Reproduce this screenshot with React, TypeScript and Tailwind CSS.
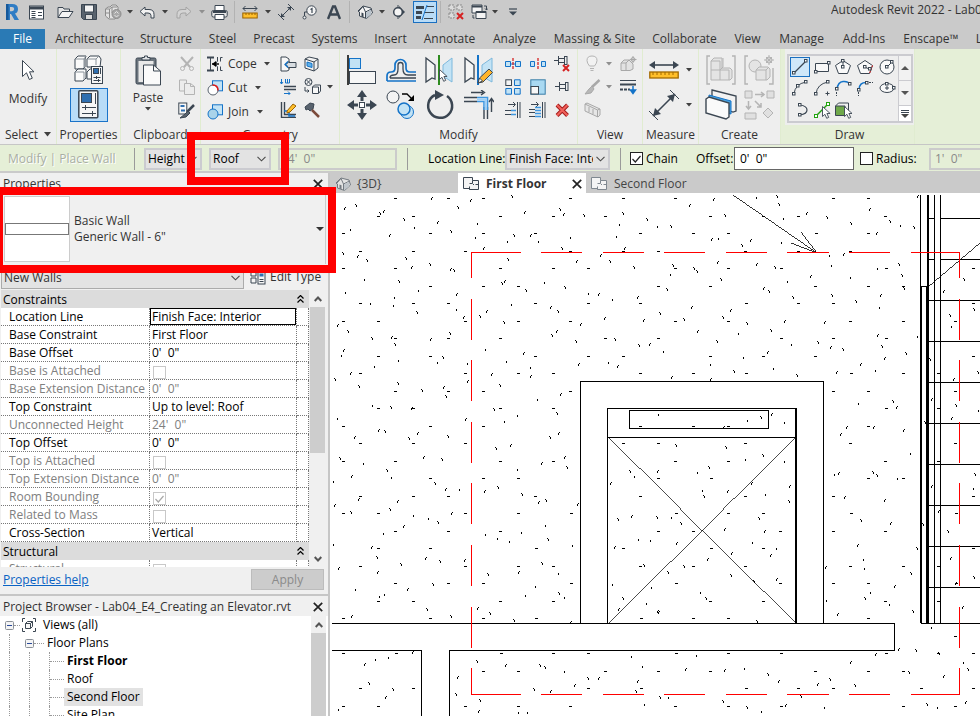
import React from "react";

type Kids = { children?: React.ReactNode };

const INK = "#3b4652";
const BLUE = "#1473c8";
const SKY = "#c3e3f5";
const DIM = "#b4b4b4";

function Ic({ w, h, c = INK, children }: Kids & { w: number; h: number; c?: string }) {
  return (
    <svg width={w} height={h} viewBox={`0 0 ${w} ${h}`} fill="none" stroke={c} className="block shrink-0" aria-hidden="true">
      {children}
    </svg>
  );
}

function Tool({ label, className = "", children }: Kids & { label: string; className?: string }) {
  return (
    <button type="button" aria-label={label} className={`flex shrink-0 items-center justify-center ${className}`}>
      {children}
    </button>
  );
}

function Drop({ dim = false }: { dim?: boolean }) {
  return (
    <Ic w={6} h={4}>
      <path d="M0 0h6l-3 3.5z" fill={dim ? "#8f8f8f" : "#404040"} stroke="none" />
    </Ic>
  );
}

function More({ label, className = "w-3", dim = false }: { label: string; className?: string; dim?: boolean }) {
  return (
    <Tool label={label} className={`h-6 ${className}`}>
      <Drop dim={dim} />
    </Tool>
  );
}

/* ---------- quick access toolbar ---------- */

function House() {
  return (
    <Ic w={16} h={16}>
      <path d="M1 7l5-5 8 2 1.500 5-6 5.500-7-2.500V8z" fill="#f4f4f4" />
      <path d="M1.500 7.500L6 2.500 8.500 8v6M8.500 8L14.500 5" />
      <path d="M9 8.500l5-3v5l-5 4z" fill="#b9c3cc" stroke="none" />
      <path d="M4.500 12.500v-4l2 .7v4" fill={INK} stroke="none" />
    </Ic>
  );
}

function SyncCubes() {
  return (
    <Ic w={18} h={16} c="#8c8c8c">
      <path d="M1.500 5l2.500-2h2l2-2h4l2 2v9l-3 3H5l-3.500-3z" fill="#e2e2e2" />
      <path d="M1.500 5h4v9M5.500 5l2.500-2h5M8 3v6M1.500 9h4" />
      <circle cx="12.500" cy="10" r="4.500" fill="#a8a8a8" />
      <path d="M10.500 9.500l2-2 2 2M10.500 11l2 2 2-2" stroke="#e4e4e4" />
    </Ic>
  );
}

function QuickAccess() {
  const sep = "h-[22px] w-px shrink-0 bg-[#b2b2b2]";
  return (
    <header className="flex h-7 items-start overflow-hidden bg-[#cacaca]">
      <nav aria-label="Quick access" className="flex h-6 shrink-0 items-center">
        <Tool label="Application menu" className="w-6">
          <Ic w={16} h={18}>
            <path d="M2 1h6q6 0 6 5 0 3.500-3 4.600L15 17h-4.500L7 11H6v6H2z" fill="#2f7cc4" stroke="none" />
            <path d="M6 4h2q2.200 0 2.200 2T8 8.200H6z" fill="#cacaca" stroke="none" />
            <path d="M2 1h2.500v16H2z" fill="#15589b" stroke="none" />
          </Ic>
        </Tool>
        <Tool label="Home" className="mr-[5px] w-6">
          <Ic w={15} h={15}>
            <rect x=".5" y="1" width="14" height="13" fill="#fff" />
            <path d="M1 3h13" strokeWidth="3" />
            <path d="M2.500 6.500h4M2.500 8.500h4M2.500 10.500h4M2.500 12.500h4M9 7.500h4M9 10.500h4" />
          </Ic>
        </Tool>
        <Tool label="Open" className="w-6">
          <Ic w={17} h={13}>
            <path d="M1 11.500v-10h5l1 1.500h5.500v2" fill="#e6e6e6" />
            <path d="M1 11.500l4-6h11l-4 6z" fill="#f4f4f4" />
          </Ic>
        </Tool>
        <Tool label="Save" className="w-6">
          <Ic w={16} h={16}>
            <path d="M.5 .5h15v15h-13l-2-2z" fill="#59636e" />
            <rect x="3.500" y="1" width="9" height="7" fill="#f4f4f4" />
            <rect x="4.500" y="10.500" width="7" height="5" fill="#d8d8d8" />
          </Ic>
        </Tool>
        <Tool label="Synchronize" className="w-6"><SyncCubes /></Tool>
        <More label="Synchronize options" className="w-[10px]" />
        <Tool label="Undo" className="w-6">
          <Ic w={16} h={13}>
            <path d="M1 5.500L6 1v2.500h4q5 0 5 5V12h-3V9.500q0-2.500-3-2.500H6v3z" fill="#f2f2f2" />
          </Ic>
        </Tool>
        <More label="Undo history" />
        <Tool label="Redo" className="w-[26px]">
          <Ic w={16} h={13} c="#a4a4a4">
            <path d="M15 5.500L10 1v2.500H6q-5 0-5 5V12h3V9.500Q4 7 7 7h3v3z" fill="#d4d4d4" />
          </Ic>
        </Tool>
        <More label="Redo history" className="w-[10px]" dim />
        <Tool label="Print" className="mr-[3px] w-6">
          <Ic w={17} h={15}>
            <path d="M4 6V.5h9V6" fill="#fff" />
            <rect x=".8" y="5.500" width="15.400" height="6.500" rx="1.500" fill="#e8e8e8" />
            <path d="M2 7h13" strokeWidth="2" />
            <path d="M4 9.500h9v5H4z" fill="#fff" />
          </Ic>
        </Tool>
        <span className={sep} />
        <Tool label="Measure" className="ml-[3px] w-6">
          <Ic w={16} h={13}>
            <path d="M1 2.500h14M3.500 0L1 2.500 3.500 5M12.500 0L15 2.500 12.500 5" />
            <rect x=".8" y="7" width="14.400" height="5" fill="#ffbf2b" stroke="#9a6200" />
            <path d="M4 7v2M7 7v2M10 7v2M13 7v2" stroke="#9a6200" />
          </Ic>
        </Tool>
        <More label="Measure options" className="mr-px w-[11px]" />
        <Tool label="Aligned dimension" className="w-6">
          <Ic w={16} h={16}>
            <path d="M3 13L13 3" />
            <path d="M0 10l6 6M10 0l6 6" />
            <path d="M3 13V9l4 4zM13 3v4L9 3z" fill={INK} stroke="none" />
          </Ic>
        </Tool>
        <Tool label="Tag by category" className="w-6">
          <Ic w={16} h={15}>
            <circle cx="9.500" cy="5.500" r="4.700" fill="#f4f4f4" />
            <path d="M8.500 4.500l1.500-1V8" strokeWidth="1.200" />
            <path d="M5 7H2.500v4" />
            <circle cx="2.500" cy="12.500" r="1.500" fill="#f4f4f4" />
          </Ic>
        </Tool>
        <Tool label="Text" className="mr-1 w-[23px]">
          <Ic w={14} h={15}>
            <path d="M1 14L6 1.500h2L13 14M3.500 9.500h7" strokeWidth="2.400" />
          </Ic>
        </Tool>
        <span className={sep} />
        <Tool label="Default 3D view" className="ml-[3px] w-6"><House /></Tool>
        <More label="3D view options" className="w-[10px]" />
        <Tool label="Section" className="mr-[2px] w-6">
          <Ic w={14} h={14}>
            <path d="M7 1l6 6-6 6" fill={INK} stroke="none" />
            <circle cx="6" cy="7" r="4.300" fill="#f4f4f4" strokeWidth="1.500" />
            <path d="M6 0v3M6 11v3" />
          </Ic>
        </Tool>
        <Tool label="Thin lines" className="mr-[3px] h-[22px] w-6 border border-[#1a6fc0] bg-[#b9dcf7]">
          <Ic w={18} h={15}>
            <path d="M0 2.500h8M0 7.500h6M0 12.500h5" strokeWidth="3" />
            <path d="M11 1.500h7M9 7.500h9M8 13.500h9" />
            <path d="M11 0L6 15" stroke={BLUE} />
          </Ic>
        </Tool>
        <span className={sep} />
        <Tool label="Close inactive views" className="ml-[3px] w-6">
          <Ic w={16} h={16} c="#8a8a8a">
            <path d="M1 1h5v5H1zM9 1h5v5H9zM1 9h5v5H1z" fill="#dcdcdc" strokeDasharray="2 1" />
            <path d="M9 9l6 6M15 9l-6 6" stroke="#d62222" strokeWidth="2" />
          </Ic>
        </Tool>
        <Tool label="Switch windows" className="w-[22px]">
          <Ic w={17} h={16}>
            <path d="M1 1h10v8H1z" fill="#f4f4f4" />
            <path d="M1 2.500h10" strokeWidth="2" />
            <path d="M5 7.500h10v7H5z" fill="#f4f4f4" />
            <path d="M5 8.500h10M13 2h2.500v4M14 4.500l1.500 1.500L17 4.500M3.500 14H2v-3" />
          </Ic>
        </Tool>
        <More label="Switch windows options" className="w-[10px]" />
        <Tool label="Customize toolbar" className="ml-[2px] w-[22px]">
          <Ic w={8} h={8}>
            <path d="M0 1h8" strokeWidth="1.200" />
            <path d="M0 3.500h8l-4 4z" fill={INK} stroke="none" />
          </Ic>
        </Tool>
      </nav>
      <span className="ml-auto w-[149px] shrink-0 overflow-hidden whitespace-nowrap text-xs leading-5">
        Autodesk Revit 2022 - Lab04_E4
      </span>
    </header>
  );
}

/* ---------- ribbon tabs ---------- */

const TABS: [string, string][] = [
  ["Architecture", "w-[85px]"],
  ["Structure", "w-[68px]"],
  ["Steel", "w-[45px]"],
  ["Precast", "w-[58px]"],
  ["Systems", "w-[63px]"],
  ["Insert", "w-[49px]"],
  ["Annotate", "w-[69px]"],
  ["Analyze", "w-[61px]"],
  ["Massing & Site", "w-[99px]"],
  ["Collaborate", "w-[81px]"],
  ["View", "w-[45px]"],
  ["Manage", "w-[63px]"],
  ["Add-Ins", "w-[62px]"],
  ["Enscape™", "w-[72px]"],
  ["Lumion", "w-[60px]"],
];

function RibbonTabs() {
  return (
    <nav aria-label="Ribbon" className="flex h-[21px] shrink-0 overflow-hidden bg-[#cacaca] text-xs leading-5 text-[#333]">
      <button type="button" className="mt-px mr-[2px] w-[45px] shrink-0 bg-[#2a7ab5] text-white">File</button>
      {TABS.map(([name, width]) => (
        <button key={name} type="button" className={`shrink-0 pt-px whitespace-nowrap ${width}`}>
          {name}
        </button>
      ))}
    </nav>
  );
}

/* ---------- ribbon ---------- */

function Group({ title, width, labelTone = "", drop = false, children }: Kids & { title: string; width: string; labelTone?: string; drop?: boolean }) {
  return (
    <section aria-label={title} className={`flex shrink-0 flex-col border-r border-[#e0ecd0] bg-[#eeeeee] ${width}`}>
      <div className="flex h-[76px] py-[3px]">{children}</div>
      <div className={`flex h-[19px] items-center justify-center gap-[6px] leading-[18px] ${labelTone}`}>
        {title}
        {drop && (
          <Ic w={7} h={5}>
            <path d="M0 0h7l-3.500 4.500z" fill="#404040" stroke="none" />
          </Ic>
        )}
      </div>
    </section>
  );
}

function Cursor({ x = 0, y = 0 }: { x?: number; y?: number }) {
  return (
    <path transform={`translate(${x} ${y})`} d="M.5 .5v10l2.400-2.200 1.800 4 2-.9-1.800-3.900h3.200z" fill="#fff" strokeWidth=".9" />
  );
}

function Pin() {
  return (
    <path d="M0 7.500h4M4.500 3v9M4.500 5.500h6M4.500 9.500h6M10.500 3v9M13 3v9M10.500 3.500H13M10.500 11.500H13" />
  );
}

function SelectGroup() {
  return (
    <Group title="Select" width="w-[57px]" drop>
      <button type="button" className="flex flex-1 flex-col items-center">
        <span className="mb-px flex h-9 items-center">
          <Ic w={14} h={22}>
            <path d="M1.500 1.500v16l4-3.700 2.800 6.700 3-1.300-2.800-6.400H13z" fill="#fff" />
          </Ic>
        </span>
        <span>Modify</span>
      </button>
    </Group>
  );
}

function PropertiesGroup() {
  return (
    <Group title="Properties" width="w-16">
      <div className="grid flex-1 grid-rows-2 place-items-center">
        <Tool label="Type properties">
          <Ic w={30} h={30}>
            <g fill="#fafafa">
              <path d="M1 4l3-3h8l-1 3v8l-2 2H1z" />
              <path d="M13 4l3-3h9l2 3-1 8H13z" />
              <path d="M1 17l3-3h8v9l-3 3H1z" />
              <path d="M13 17l3-3h6v10h-9z" />
            </g>
            <path d="M1 4h9v9M13 4h9v6M1 17h9v8M10 4l2-3M22 4l3-3" stroke="#8a929a" />
            <rect x="17.500" y="11.500" width="11" height="17" fill="#f6f6f6" />
            <rect x="19.500" y="13.500" width="5" height="5" fill="#2f6fb0" />
            <path d="M26.500 13v6M19.500 22.500h7M19.500 25.500h7M22.500 21v3M24.500 24v3" />
          </Ic>
        </Tool>
        <Tool label="Properties palette" className="h-[34px] w-[38px] border border-[#1a73c9] bg-[#b9dcf7]">
          <Ic w={21} h={29}>
            <rect x=".8" y=".8" width="19" height="27" rx="1" fill="#f6f6f6" strokeWidth="1.500" />
            <rect x="3.500" y="3.500" width="10" height="9" fill="#2f6fb0" />
            <path d="M17.500 3v11M4 17.500h14M4 23.500h14M7.500 15v5M14.500 21v5" />
          </Ic>
        </Tool>
      </div>
    </Group>
  );
}

function ClipboardGroup() {
  return (
    <Group title="Clipboard" width="w-20">
      <button type="button" className="flex w-[54px] flex-col items-center">
        <span className="mb-px flex h-9 items-center">
          <Ic w={27} h={31}>
            <rect x="1" y="3" width="20" height="26" rx="1.500" fill="#6b747d" />
            <rect x="3.500" y="6" width="15" height="21" fill="#e9e9e9" stroke="none" />
            <path d="M7 5V2.500h2.500V1h3v1.500H15V5z" fill="#dfe2e5" />
            <path d="M8.500 10h10l7 6v14h-17z" fill="#fafafa" />
            <path d="M18.500 10v6h7" />
          </Ic>
        </span>
        <span className="leading-[18px]">Paste</span>
        <Drop />
      </button>
      <div className="ml-[3px] grid w-4 grid-rows-3 place-items-center">
        <Tool label="Cut to clipboard">
          <Ic w={16} h={16} c={DIM}>
            <path d="M2 1l9 10M14 1L5 11" strokeWidth="2" />
            <circle cx="3.500" cy="12.500" r="2" />
            <circle cx="12.500" cy="12.500" r="2" />
          </Ic>
        </Tool>
        <Tool label="Copy to clipboard">
          <Ic w={16} h={16} c={DIM}>
            <path d="M.5 1h7v11h-7z" fill="#ececec" />
            <path d="M5.500 4.500h6l4 3v8h-10zM11.500 4.500v3h4" fill="#ececec" />
          </Ic>
        </Tool>
        <Tool label="Match type properties">
          <Ic w={17} h={17}>
            <rect x=".8" y="1" width="8" height="11" fill="#f8f8f8" />
            <path d="M2.500 4h4M3 8.500h4" stroke="#2f6fb0" strokeWidth="2" />
            <path d="M16 3L9 10" strokeWidth="2.500" />
            <path d="M10 9l-3 3-5 4 6-1 4-4z" fill="#59636e" />
          </Ic>
        </Tool>
      </div>
    </Group>
  );
}

function GeometryGroup() {
  const row = "flex h-6 items-center";
  return (
    <Group title="Geometry" width="w-[139px]">
      <div className="ml-[6px] w-[70px]">
        <button type="button" className={row}>
          <Ic w={17} h={16}>
            <path d="M0 1.500h7M0 14.500h7" strokeWidth="2" />
            <path d="M3.500 2v12M10.500 1v4l-2 3 2 3v4M15.500 1.500h-2v4M15.500 14.500h-2v-4" />
            <path d="M5 8h7" stroke="#000" strokeWidth="1.400" />
            <path d="M5 8l4-3v6z" fill="#000" stroke="none" />
          </Ic>
          <span className="ml-1 w-9 text-left">Cope</span>
          <Drop />
        </button>
        <button type="button" className={row}>
          <Ic w={17} h={16}>
            <rect x="5.500" y=".8" width="10" height="10" fill={SKY} stroke={BLUE} />
            <circle cx="6" cy="10" r="5" fill="#fff" stroke="#59636e" />
            <path d="M5.500 5q5.500 0 5.500 5.500" stroke="#e01b1b" strokeWidth="1.500" />
          </Ic>
          <span className="ml-1 w-[27px] text-left">Cut</span>
          <Drop />
        </button>
        <button type="button" className={row}>
          <Ic w={17} h={16}>
            <rect x="5.500" y=".8" width="10" height="10" fill={SKY} stroke={BLUE} />
            <circle cx="6" cy="10" r="5" fill="#a9d3ea" stroke={BLUE} />
          </Ic>
          <span className="ml-1 w-[29px] text-left">Join</span>
          <Drop />
        </button>
      </div>
      <div className="grid w-[22px] grid-rows-3 place-items-center">
        <Tool label="Wall joins">
          <Ic w={17} h={16}>
            <path d="M1 1h5l3 2v3L5 8.500 9 11v3l-2 1H1z" fill="#f7f7f7" />
            <path d="M6 8.500l3-3v1h7v5H9v1z" fill="#d8dde1" />
            <path d="M8 5.500L5 8.500l3 3" stroke={BLUE} strokeWidth="1.300" />
          </Ic>
        </Tool>
        <Tool label="Beam joins">
          <Ic w={17} h={16}>
            <path d="M1.500 0v5M0 3l1.500 2L3 3M5.500 0v4h4V0M7.500 0v4" stroke={BLUE} />
            <path d="M4 7.500h12M4 10.500h12" strokeWidth="1.500" />
            <path d="M4 14.500h6M8 12.500l2 2-2 2" stroke={BLUE} />
          </Ic>
        </Tool>
        <Tool label="Split face">
          <Ic w={17} h={16}>
            <path d="M1.500 0v15.500H16M4.500 0v12.500H16" strokeWidth="1.400" />
            <path d="M4 9h5v5h6" stroke={BLUE} strokeWidth="1.500" />
            <path d="M7 9l6-7 3 2-6 6-3 1z" fill="#ffbf2b" stroke="#9a6200" />
          </Ic>
        </Tool>
      </div>
      <div className="ml-[2px] grid w-[22px] grid-rows-3 place-items-center">
        <Tool label="Paint">
          <Ic w={16} h={16}>
            <path d="M1 3l4-2 9 2v9l-4 3-9-3z" fill="#f2f2f2" />
            <path d="M10 6l4-3M10 6v9M1 3l9 3" />
            <path d="M3 6l5 1.500v4L3 10z" fill="#5fb0e8" stroke={BLUE} />
          </Ic>
        </Tool>
        <Tool label="Demolish">
          <Ic w={17} h={17}>
            <circle cx="4.500" cy="4" r="3.500" fill="#f4f4f4" />
            <path d="M2.500 2l4 4M6.500 2l-4 4M1 9v4h4M3.500 11.500L5 13l-1.500 1.500" />
            <path d="M8.500 9l2-2h6v6l-2 2.500h-6zM8.500 9h6v6" fill="#f8f8f8" />
          </Ic>
        </Tool>
        <Tool label="Hammer">
          <Ic w={17} h={17}>
            <path d="M1 5l5-4 4 1-1 5-3 2-2-2-2 1z" fill="#59636e" />
            <path d="M8 8l7 7" stroke="#7b4a3a" strokeWidth="2.500" />
          </Ic>
        </Tool>
      </div>
      <div className="grid w-3 place-items-center pl-[2px]">
        <Tool label="Demolish options">
          <Drop />
        </Tool>
      </div>
    </Group>
  );
}

const MODIFY_BIG: [string, React.ReactNode][] = [
  ["Align", <Ic w={30} h={30}>
    <path d="M1 0v30" stroke="#000" strokeWidth="1.500" />
    <rect x="2.500" y="3.500" width="11" height="10" fill={SKY} stroke={BLUE} />
    <rect x="2.500" y="16.500" width="26" height="12" fill="#f6f6f6" />
  </Ic>],
  ["Offset", <Ic w={30} h={28}>
    <path d="M1 25V20q0-4 4-4t4-4V9a5.500 5.500 0 0 1 11 0v3q0 4 4 4h6M1 25h29" stroke={BLUE} strokeWidth="1.700" />
    <path d="M4 22q0-3 4-3 4 0 4-6V9a2.500 2.500 0 0 1 5 0v4q0 6 5 6h8M4 22h26" strokeWidth="1.300" />
  </Ic>],
  ["Mirror pick axis", <Ic w={30} h={30}>
    <path d="M1 3l9 7v14l-3-1-6 4z" fill="#f4f4f4" strokeWidth="1.300" />
    <path d="M27 3l-9 7v14l3-1 6 4z" fill={SKY} stroke="#7db8dc" />
    <path d="M14 0v30" stroke="#2e8b1f" strokeWidth="2" />
    <Cursor x={14} y={14} />
  </Ic>],
  ["Mirror draw axis", <Ic w={30} h={30}>
    <path d="M1 3l9 7v14l-3-1-6 4z" fill="#f4f4f4" strokeWidth="1.300" />
    <path d="M28 3l-10 7v14l3-1 7 4z" fill={SKY} stroke="#7db8dc" />
    <path d="M14 0v30" stroke={BLUE} strokeWidth="2" />
    <path d="M14 28l1.500-5L25 14l3.500 3.500L19 27z" fill="#ffb52b" />
    <path d="M14 28l1.500-5 3 3z" fill="#fff" />
  </Ic>],
  ["Move", <Ic w={30} h={30}>
    <path d="M15 4v22M4 15h22" strokeWidth="3" />
    <path d="M15 0l5 7H10zM15 30l5-7H10zM0 15l7-5v10zM30 15l-7-5v10z" fill={INK} stroke="none" />
    <rect x="11.500" y="11.500" width="7" height="7" fill="#eee" stroke="#eee" />
    <rect x="12.500" y="12.500" width="5" height="5" fill="#fff" />
  </Ic>],
  ["Copy", <Ic w={30} h={30}>
    <circle cx="7" cy="7" r="6" fill="#f4f4f4" />
    <circle cx="21" cy="22" r="6.500" fill={SKY} stroke={BLUE} />
    <circle cx="18" cy="19" r="6" fill={SKY} stroke={BLUE} strokeWidth="1.500" />
    <path d="M16 4h5l5 5" stroke="#000" strokeWidth="1.300" />
    <path d="M28 11h-6l6-6z" fill="#000" stroke="none" />
  </Ic>],
  ["Rotate", <Ic w={30} h={30}>
    <path d="M10 5A12 12 0 1 0 22 6" strokeWidth="2.500" />
    <path d="M10 0l9 5-9 5z" fill={INK} stroke="none" />
  </Ic>],
  ["Trim to corner", <Ic w={30} h={30}>
    <path d="M7 2.500h12M17 0l3.500 2.500L17 5M27.500 22V9M25 12l2.500-3.500L30 12" strokeWidth="1.400" />
    <path d="M0 7.500h13M0 11.500h13M20 17v12M23.500 17v12" strokeWidth="1.400" />
    <path d="M13 7.500h10.500V20M13 11.500h7V20" stroke="#3f97e0" strokeWidth="1.600" />
    <path d="M13 9.500h8.700V20" stroke="#9fd0f7" strokeWidth="2" />
  </Ic>],
];

const MODIFY_SMALL: [string, React.ReactNode][] = [
  ["Split element", <Ic w={16} h={13}>
    <path d="M.5 4.500h5v5h-5zM10.500 4.500h5v5h-5z" fill={SKY} stroke={BLUE} />
    <path d="M5 7h6" stroke={BLUE} />
    <path d="M8 1v11" stroke="#d62222" strokeWidth="1.300" strokeDasharray="3 1" />
  </Ic>],
  ["Split with gap", <Ic w={16} h={13}>
    <path d="M.5 4.500h4v5h-4zM11.500 4.500h4v5h-4z" fill={SKY} stroke={BLUE} />
    <path d="M8 1v11" stroke="#d62222" strokeWidth="1.300" strokeDasharray="3 1" />
  </Ic>],
  ["Unpin", <Ic w={17} h={17}>
    <g transform="translate(0 -2)"><Pin /></g>
    <path d="M9 10l6 6M15 10l-6 6" stroke="#d62222" strokeWidth="2" />
  </Ic>],
  ["Array", <Ic w={16} h={16}>
    <rect x=".8" y=".8" width="5.700" height="5.700" fill="#f4f4f4" />
    <path d="M9.500 .8h5.700v5.700H9.500zM.8 9.500h5.700v5.700H.8zM9.500 9.500h5.700v5.700H9.500z" fill={SKY} stroke={BLUE} />
  </Ic>],
  ["Scale", <Ic w={16} h={16}>
    <rect x=".8" y=".8" width="14.400" height="14.400" fill="#a9d9f2" stroke="#3b7ea8" />
    <rect x="1" y="7.500" width="7.500" height="7.500" fill="#f8f8f8" />
  </Ic>],
  ["Pin", <Ic w={16} h={15}><Pin /></Ic>],
  ["Trim single", <Ic w={16} h={16}>
    <path d="M3 2.500h7M8 0l2.500 2.500L8 5M0 8.500h6M0 12.500h6M12.500 0v16M15 0v16" />
    <path d="M6 8.500h5M6 12.500h5" stroke="#3f97e0" strokeWidth="1.500" />
  </Ic>],
  ["Trim multiple", <Ic w={17} h={16}>
    <path d="M2 2.500h7M7 0l2.500 2.500L7 5M0 7.500h6M0 10.500h6M0 14.500h6M13.500 0v16M16 0v16" />
    <path d="M6 5.500h6M6 8.500h6M6 11.500h6M6 14.500h6" stroke="#3f97e0" strokeWidth="1.700" />
  </Ic>],
  ["Delete", <Ic w={15} h={15}>
    <path d="M2 2l10.500 10.500M12.500 2L2 12.500" stroke="#a01818" strokeWidth="4" />
    <path d="M2 2l10.500 10.500M12.500 2L2 12.500" stroke="#f0605a" strokeWidth="2.200" />
  </Ic>],
];

function ModifyGroup() {
  return (
    <Group title="Modify" width="w-[238px]">
      <div className="ml-[2px] grid w-[156px] grid-cols-4 grid-rows-2 place-items-center">
        {MODIFY_BIG.map(([name, icon]) => (
          <Tool key={name} label={name}>{icon}</Tool>
        ))}
      </div>
      <div className="ml-[2px] grid w-[75px] grid-cols-3 grid-rows-3 place-items-center">
        {MODIFY_SMALL.map(([name, icon]) => (
          <Tool key={name} label={name}>{icon}</Tool>
        ))}
      </div>
    </Group>
  );
}

function ViewGroup() {
  return (
    <Group title="View" width="w-[65px]">
      <div className="ml-[3px] grid w-[34px] grid-cols-[22px_12px] grid-rows-3 place-items-center">
        <Tool label="Reveal hidden">
          <Ic w={12} h={17} c={DIM}>
            <path d="M3.500 11Q1 8 1 5.500q0-4.500 5-4.500t5 4.500Q11 8 8.500 11z" fill="#f2f2f2" />
            <path d="M4 13.500h4M4.500 15.500h3" />
          </Ic>
        </Tool>
        <More label="Hide options" dim />
        <Tool label="Override graphics">
          <Ic w={17} h={16} c="#a8a8a8">
            <path d="M15.500 1L8 8" strokeWidth="2.500" />
            <path d="M8 7L5 10l-4 5 6-1 3-4z" fill="#b8b8b8" />
          </Ic>
        </Tool>
        <More label="Override options" dim />
        <Tool label="Selection box">
          <Ic w={17} h={16} c="#a8a8a8">
            <path d="M1 2l2-1 13 6v6l-2 2L1 9zM1 2l12.500 6v7M13.500 8L16 7M5 5v5M9 7v5" fill="#e6e6e6" />
          </Ic>
        </Tool>
      </div>
      <div className="ml-[2px] grid w-[22px] grid-rows-3 place-items-center">
        <Tool label="Displace elements">
          <Ic w={17} h={16} c="#a8a8a8">
            <path d="M1 7l3-3h5l4 4v5l-3 1.500H1zM1 7h5v7M6 7l3-3" fill="#e2e2e2" />
            <circle cx="13" cy="3.500" r="2" />
            <path d="M13 0v7M9.500 3.500h7" />
          </Ic>
        </Tool>
        <Tool label="Linework">
          <Ic w={17} h={16}>
            <path d="M0 1.500h16" />
            <path d="M0 5.500h16" strokeWidth="2" />
            <path d="M0 10.500h10" strokeWidth="2" strokeDasharray="3 1" />
            <path d="M13 7v6M10.500 11l2.500 3.500 2.500-3.500z" stroke={BLUE} fill={BLUE} strokeWidth="1.500" />
          </Ic>
        </Tool>
      </div>
    </Group>
  );
}

function MeasureGroup() {
  return (
    <Group title="Measure" width="w-14">
      <div className="ml-[5px] grid w-8 grid-rows-2 place-items-center">
        <Tool label="Measure">
          <Ic w={30} h={20}>
            <path d="M2 5h26" strokeWidth="1.600" />
            <path d="M0 5l6-4v8zM30 5l-6-4v8z" fill={INK} stroke="none" />
            <rect x=".8" y="12" width="28.400" height="6" fill="#ffbf2b" stroke="#a36a00" strokeWidth="1.300" />
            <path d="M4 12v3M8 12v3M12 12v3M16 12v3M20 12v3M24 12v3" stroke="#a36a00" />
          </Ic>
        </Tool>
        <Tool label="Dimension">
          <Ic w={30} h={30}>
            <path d="M4 26L26 4" strokeWidth="1.600" />
            <path d="M0 21l9 9M21 0l9 9" />
            <path d="M4 26l2-8 6 6zM26 4l-2 8-6-6z" fill={INK} stroke="none" />
          </Ic>
        </Tool>
      </div>
      <div className="ml-px grid w-4 grid-rows-2 place-items-center">
        <Tool label="Measure options"><Drop /></Tool>
        <Tool label="Dimension options"><Drop /></Tool>
      </div>
    </Group>
  );
}

function CreateGroup() {
  return (
    <Group title="Create" width="w-[82px]">
      <div className="ml-[3px] grid w-[76px] grid-cols-2 grid-rows-2 place-items-center">
        <Tool label="Create assembly">
          <Ic w={30} h={30} c={DIM}>
            <path d="M4 1H1v28h3M26 1h3v28h-3" strokeWidth="1.400" />
            <path d="M5 6l3-3h8v10h8l2 2v8l-2 2H5z" fill="#e4e4e4" />
            <path d="M5 15h9v10M14 15l3-3V3M14 15h9v10M5 6h9v9" />
          </Ic>
        </Tool>
        <Tool label="Create parts">
          <Ic w={31} h={30} c={DIM}>
            <path d="M4 1H1v28h3M25 29h4V13" strokeWidth="1.400" />
            <circle cx="11" cy="11" r="6" fill="#e4e4e4" />
            <path d="M12 15l3-3h9l2 2v8l-3 3H12zM12 15h10v10M22 15l3-3" fill="#e4e4e4" />
            <circle cx="25" cy="5" r="3" />
            <path d="M25 0v10M20 5h10M22 2l6 6M28 2l-6 6" />
          </Ic>
        </Tool>
        <Tool label="Create similar">
          <Ic w={32} h={31}>
            <path d="M7 1l24 6v15l-3 1L7 16z" fill="#f2f2f2" strokeWidth="1.300" />
            <path d="M4 6l22 6v13L4 19z" fill="#4aa3e0" stroke={BLUE} />
            <path d="M1 10l3-2 20 6v14l-3 2L1 24z" fill="#fafafa" strokeWidth="1.400" />
          </Ic>
        </Tool>
        <Tool label="Create group">
          <Ic w={31} h={30} c={DIM}>
            <path d="M1 1h7v7H1zM23 1h7v7h-7zM1 23h11v6H1zM24 18l5 5-5 5-5-5z" fill="#e0e0e0" />
            <path d="M11 4.500h8M17 2l3 2.500L17 7M4.500 11v7M2 16l2.500 3L7 16M11 11l6 6M17 13v4h-4" strokeWidth="1.500" />
          </Ic>
        </Tool>
      </div>
    </Group>
  );
}

function Knob({ x, y }: { x: number; y: number }) {
  return <rect x={x - 1} y={y - 1} width="2.500" height="2.500" fill="#fff" stroke={INK} />;
}

const DRAW: [string, React.ReactNode][] = [
  ["Line", <><path d="M3 15L15 3" strokeWidth="1.300" /><Knob x={2.5} y={14.5} /><Knob x={14.5} y={2.5} /></>],
  ["Rectangle", <><path d="M2.500 5.500h13v8h-13z" fill="#f8f8f8" /><Knob x={15.5} y={4.5} /><Knob x={2.5} y={13.5} /></>],
  ["Inscribed polygon", <><path d="M9 2.500l7.500 5-3 8h-9l-3-8z" fill="#fafafa" /><path d="M9 3v6" /><Knob x={8.5} y={2.5} /><Knob x={8.5} y={8.5} /></>],
  ["Circumscribed polygon", <><path d="M9 2.500l7.500 5-3 8h-9l-3-8z" fill="#fafafa" /><path d="M9 9l4 2" /><path d="M16.500 7.500l-3 8" stroke="#e01b1b" strokeDasharray="2 1" /><Knob x={8.5} y={8.5} /><Knob x={13.5} y={10.5} /></>],
  ["Circle", <><circle cx="9" cy="9" r="7" fill="#fafafa" /><path d="M9 9l5-5" /><Knob x={8.5} y={8.5} /><Knob x={13.5} y={3.5} /></>],
  ["Start-end-radius arc", <><path d="M3 15Q4 5 15 3" /><Knob x={2.5} y={14.5} /><Knob x={6.5} y={6.5} /><Knob x={14.5} y={2.5} /></>],
  ["Center-ends arc", <><path d="M3 15Q4 5 15 3M14.500 12.500v4M12.500 14.500h4" /><Knob x={2.5} y={14.5} /><Knob x={14.5} y={2.5} /></>],
  ["Tangent end arc", <><path d="M3 10Q4 3 9 2.500T15.500 5" stroke={BLUE} strokeWidth="1.500" /><path d="M2.500 13v4" strokeDasharray="2 1" /><Knob x={2.5} y={9.5} /><Knob x={15.5} y={4.5} /></>],
  ["Fillet arc", <><path d="M3 11Q3 3 11 3.500" stroke={BLUE} strokeWidth="1.500" /><path d="M2.500 13v4M13 3.500h4" strokeDasharray="2 1" /><Knob x={2.5} y={10.5} /><Knob x={10.5} y={3.5} /></>],
  ["Ellipse", <><ellipse cx="9" cy="9" rx="7" ry="4.500" fill="#fafafa" /><path d="M9 7v4M7 9h4" /><Knob x={15.5} y={8.5} /><Knob x={8.5} y={4.5} /></>],
  ["Partial ellipse", <><path d="M9 4q7 1 7 5t-7 5" strokeWidth="1.200" /><Knob x={8.5} y={3.5} /><Knob x={8.5} y={13.5} /></>],
  ["Pick lines", <><path d="M3 15L15 3" stroke="#22a30f" strokeWidth="1.500" /><rect x="1.500" y="13.500" width="3" height="3" stroke="#22a30f" fill="#fff" /><rect x="13.500" y="1.500" width="3" height="3" stroke="#22a30f" fill="#fff" /><Cursor x={9} y={5} /></>],
  ["Pick faces", <><path d="M1.500 5l3-3h10v8l-3 4.500" fill="#f0f0f0" /><path d="M1.500 5h9.500v9.500H1.500z" fill="#6fa84a" /><Cursor x={10} y={5} /></>],
];

function DrawGroup() {
  return (
    <Group title="Draw" width="ml-1 w-[130px]" labelTone="bg-[#e5efd7]">
      <div className="mt-[2px] ml-[2px] flex h-[69px] w-[126px] border-2 border-[#cbcbd0]">
        <div className="grid w-[110px] grid-cols-5 grid-rows-3 place-items-center">
          {DRAW.map(([name, icon], i) => (
            <Tool
              key={name}
              label={name}
              className={i === 0 ? "h-5 w-5 border border-[#1a6fc0] bg-[#cfe7f9]" : "h-5 w-5"}
            >
              <Ic w={18} h={18}>{icon}</Ic>
            </Tool>
          ))}
        </div>
        <div className="flex flex-1 flex-col divide-y divide-[#cbcbd0] border-l border-[#cbcbd0] bg-[#f2f2f2]">
          <Tool label="Scroll up" className="flex-1">
            <Ic w={8} h={4}><path d="M0 4h8L4 0z" fill="#555" stroke="none" /></Ic>
          </Tool>
          <Tool label="Scroll down" className="flex-1">
            <Ic w={8} h={4}><path d="M0 0h8L4 4z" fill="#555" stroke="none" /></Ic>
          </Tool>
          <Tool label="Expand gallery" className="w-3 h-[15px] bg-white">
            <Ic w={8} h={8}><path d="M0 .5h8M0 2.500h8" /><path d="M0 4h8L4 8z" fill="#444" stroke="none" /></Ic>
          </Tool>
        </div>
      </div>
    </Group>
  );
}

function Ribbon() {
  return (
    <div className="flex h-24 shrink-0 overflow-hidden border-b border-[#c6c6c6] bg-[#e5efd7] text-xs leading-5 text-[#333]">
      <SelectGroup />
      <PropertiesGroup />
      <ClipboardGroup />
      <GeometryGroup />
      <ModifyGroup />
      <ViewGroup />
      <MeasureGroup />
      <CreateGroup />
      <DrawGroup />
    </div>
  );
}

/* ---------- options bar ---------- */

function Chevron() {
  return (
    <Ic w={9} h={6} c="#4a4a4a">
      <path d="M.5 .8l4 4 4-4" strokeWidth="1.100" />
    </Ic>
  );
}

function Picker({ label, value, options, className }: { label: string; value: string; options: string[]; className: string }) {
  return (
    <span className={`grid shrink-0 items-center ${className}`}>
      <select
        aria-label={label}
        defaultValue={value}
        className="h-full w-full min-w-0 appearance-none rounded-none border-0 bg-transparent pl-[2px] pr-[15px] outline-none [grid-area:1/1]"
      >
        {options.map((o) => (
          <option key={o}>{o}</option>
        ))}
      </select>
      <span className="pointer-events-none mr-[3px] justify-self-end [grid-area:1/1]">
        <Chevron />
      </span>
    </span>
  );
}

function Tick({ id, label, checked = false, disabled = false }: { id: string; label?: string; checked?: boolean; disabled?: boolean }) {
  return (
    <span className="grid h-[13px] w-[13px] shrink-0 place-items-center">
      <input
        id={id}
        type="checkbox"
        aria-label={label}
        defaultChecked={checked}
        disabled={disabled}
        className="h-[13px] w-[13px] appearance-none border border-[#222] bg-white [grid-area:1/1] disabled:border-[#c8c8c8]"
      />
      {checked && (
        <span className="pointer-events-none [grid-area:1/1]">
          <Ic w={9} h={8} c={disabled ? "#a8a8a8" : "#222"}>
            <path d="M.5 4l2.800 3L8.500 1" strokeWidth="1.200" />
          </Ic>
        </span>
      )}
    </span>
  );
}

function OptionsBar() {
  const sep = "h-[22px] w-px shrink-0 bg-[#9a9a9a]";
  const pick = "h-[22px] border-2 border-[#cbcbd0] bg-[#e3e3e3]";
  const off = "h-[22px] shrink-0 border-2 border-[#cbcbcb] bg-[#e5efd7] text-[#8a8a8a] outline-none";
  return (
    <div className="flex h-[26px] shrink-0 items-center overflow-hidden bg-[#e5efd7] pt-px text-xs whitespace-nowrap text-black">
      <span className="w-[126px] shrink-0 pl-2 text-[#a9aea4] [text-shadow:1px_1px_0_#fff]">Modify | Place Wall</span>
      <span className={`ml-2 mr-[9px] ${sep}`} />
      <Picker label="Height or depth" value="Height" options={["Height", "Depth"]} className={`mr-[7px] w-[58px] ${pick}`} />
      <Picker label="Top level" value="Roof" options={["Unconnected", "Roof", "Second Floor"]} className={`mr-[7px] w-[62px] ${pick}`} />
      <input aria-label="Unconnected height" disabled defaultValue={"24'  0\""} className={`w-[119px] pl-px ${off}`} />
      <span className={`ml-[10px] mr-5 ${sep}`} />
      <span className="w-[77px] shrink-0">Location Line:</span>
      <Picker label="Location line" value="Finish Face: Interior" options={["Wall Centerline", "Finish Face: Interior"]} className={`w-[105px] ${pick}`} />
      <span className={`ml-[10px] mr-[9px] ${sep}`} />
      <Tick id="chain" checked />
      <label htmlFor="chain" className="ml-[3px] w-[50px] shrink-0">Chain</label>
      <label htmlFor="offset" className="w-[38px] shrink-0">Offset:</label>
      <input id="offset" defaultValue={"0'  0\""} className="mr-[6px] h-[23px] w-[120px] shrink-0 border border-[#666] bg-white pl-[5px] outline-none" />
      <Tick id="radius" />
      <label htmlFor="radius" className="ml-[3px] w-[53px] shrink-0">Radius:</label>
      <input aria-label="Radius value" disabled defaultValue={"1'  0\""} className={`w-[110px] pl-1 ${off}`} />
    </div>
  );
}

/* ---------- properties palette ---------- */

type Prop = { name: string; value?: string; tick?: boolean; off?: boolean; focus?: boolean };

const CONSTRAINTS: Prop[] = [
  { name: "Location Line", value: "Finish Face: Interior", focus: true },
  { name: "Base Constraint", value: "First Floor" },
  { name: "Base Offset", value: "0'  0\"" },
  { name: "Base is Attached", tick: false, off: true },
  { name: "Base Extension Distance", value: "0'  0\"", off: true },
  { name: "Top Constraint", value: "Up to level: Roof" },
  { name: "Unconnected Height", value: "24'  0\"", off: true },
  { name: "Top Offset", value: "0'  0\"" },
  { name: "Top is Attached", tick: false, off: true },
  { name: "Top Extension Distance", value: "0'  0\"", off: true },
  { name: "Room Bounding", tick: true, off: true },
  { name: "Related to Mass", tick: false, off: true },
  { name: "Cross-Section", value: "Vertical" },
];

const STRUCTURAL: Prop[] = [{ name: "Structural", tick: false, off: true }];

function Section({ title, rows }: { title: string; rows: Prop[] }) {
  const cell = "h-[18px] border-r border-b border-dotted border-[#777] p-0";
  return (
    <tbody>
      <tr className="bg-[#dcdcdc]">
        <th colSpan={2} scope="rowgroup" className="h-[18px] p-0 text-left font-normal text-black">
          <span className="block pl-[2px]">{title}</span>
        </th>
        <td className="p-0">
          <button type="button" aria-label={`Collapse ${title}`} className="block">
            <Ic w={7} h={8} c="#000">
              <path d="M.5 3.500l3-3 3 3M.5 7.500l3-3 3 3" strokeWidth="1.200" />
            </Ic>
          </button>
        </td>
      </tr>
      {rows.map((r) => (
        <tr key={r.name} className={r.off ? "text-[#808080]" : "text-black"}>
          <th scope="row" className={`text-left font-normal ${cell}`}>
            <span className="block pl-2 whitespace-nowrap">{r.name}</span>
          </th>
          <td className={cell}>
            {r.value === undefined ? (
              <span className="flex h-[17px] items-end pl-[3px]">
                <Tick id={r.name} label={r.name} checked={r.tick} disabled />
              </span>
            ) : (
              <span className={`block whitespace-pre ${r.focus ? "h-[17px] border border-black pl-px leading-[15px]" : "pl-[2px]"}`}>{r.value}</span>
            )}
          </td>
          <td className={cell} />
        </tr>
      ))}
    </tbody>
  );
}

function Arrow({ up = false }: { up?: boolean }) {
  return (
    <Ic w={8} h={6} c="#555">
      <path d={up ? "M.7 5L4 1.500 7.300 5" : "M.7 1L4 4.500 7.300 1"} strokeWidth="2" />
    </Ic>
  );
}

function Close({ label }: { label: string }) {
  return (
    <Tool label={label} className="h-[18px] w-[18px]">
      <Ic w={10} h={10} c="#222">
        <path d="M.8 .8l8.400 8.400M9.200 .8L.8 9.200" strokeWidth="1.700" />
      </Ic>
    </Tool>
  );
}

function PropertiesPalette() {
  return (
    <section aria-label="Properties" className="shrink-0 bg-[#f0f0f0]">
      <div className="flex h-5 items-center justify-between pt-px pr-px pl-[3px] text-[#333]">
        <h2>Properties</h2>
        <Close label="Close properties" />
      </div>
      <button type="button" className="flex h-[73px] w-full items-center pb-px pl-1 text-left text-[#333]">
        <span className="flex h-[66px] w-[66px] items-center border border-[#ccc] bg-white">
          <span className="h-[12px] w-full border border-[#777]" />
        </span>
        <span className="ml-1 flex-1 leading-4">
          Basic Wall
          <br />
          Generic Wall - 6"
        </span>
        <span className="flex h-[70px] w-[10px] items-center border-r border-[#ccc]">
          <Ic w={8} h={4}><path d="M0 0h8L4 4z" fill="#333" stroke="none" /></Ic>
        </span>
        <span className="w-[2px]" />
      </button>
      <div className="flex h-6 items-center text-[#333]">
        <Picker label="Element filter" value="New Walls" options={["New Walls"]} className="ml-px h-[22px] w-[243px] border border-[#ababab] bg-[#e3e3e3]" />
        <button type="button" className="ml-[6px] flex items-center gap-1 pb-[2px]">
          <Ic w={16} h={16}>
            <path d="M1 3h5v4H1zM1 9h5v5H1z" fill="#f4f4f4" />
            <rect x="8" y="3" width="7" height="12" fill="#f6f6f6" />
            <path d="M9.500 6h4" stroke="#2f6fb0" strokeWidth="3" />
            <path d="M9.500 10.500h4M9.500 12.500h4" />
          </Ic>
          <span>Edit Type</span>
        </button>
      </div>
      <div className="flex h-[277px] overflow-hidden">
        <div className="ml-px flex-1 overflow-hidden bg-white">
          <table className="w-full table-fixed border-separate border-spacing-0 leading-[17px]">
            <colgroup>
              <col />
              <col className="w-[147px]" />
              <col className="w-[12px]" />
            </colgroup>
            <Section title="Constraints" rows={CONSTRAINTS} />
            <Section title="Structural" rows={STRUCTURAL} />
          </table>
        </div>
        <div className="mr-[2px] flex w-[17px] flex-col items-center bg-[#f0f0f0]">
          <span className="flex h-[17px] items-center"><Arrow up /></span>
          <span className="h-[146px] w-[15px] bg-[#cdcdcd]" />
          <span className="mt-auto flex h-[17px] items-center"><Arrow /></span>
        </div>
      </div>
      <div className="flex h-[27px] items-center justify-between pb-[2px] pl-[3px] pr-1">
        <a href="#help" className="text-[#0a63c4] underline">Properties help</a>
        <button type="button" disabled className="h-[21px] w-[73px] border border-[#bcbcbc] bg-[#cccccc] text-[#8a8a8a]">
          Apply
        </button>
      </div>
    </section>
  );
}

/* ---------- project browser ---------- */

function Expander() {
  return (
    <button type="button" aria-label="Collapse" className="shrink-0">
      <Ic w={9} h={9} c="#8a9098">
        <rect x=".5" y=".5" width="8" height="8" rx="1" fill="#f4f4f4" />
        <path d="M2 4.500h5" stroke="#2a4a9a" />
      </Ic>
    </button>
  );
}

function ProjectBrowser() {
  const row = "flex h-[18px] items-center";
  const guide = "h-full shrink-0 border-r border-dotted border-[#999]";
  const lead = "h-px shrink-0 border-t border-dotted border-[#999]";
  return (
    <section aria-label="Project browser" className="flex min-h-0 flex-1 flex-col overflow-hidden border-t-2 border-[#c6c6c6] bg-[#f0f0f0]">
      <div className="flex h-5 shrink-0 items-center justify-between pt-px pr-px pl-[3px] text-[#333]">
        <h2>Project Browser - Lab04_E4_Creating an Elevator.rvt</h2>
        <Close label="Close project browser" />
      </div>
      <div className="flex min-h-0 flex-1 bg-white">
        <ul className="flex-1 overflow-hidden text-black">
          <li className={`pl-[5px] ${row}`}>
            <Expander />
            <span className={`w-[6px] ${lead}`} />
            <span className="ml-[2px] mr-[7px]">
              <Ic w={14} h={14}>
                <path d="M3 .5H.5V4M11 .5h2.500V4M3 13.500H.5V10M11 13.500h2.500V10" />
                <path d="M3.500 5.500l2-2h5v5l-2 2h-5zM3.500 5.500h5v5M8.500 5.500l2-2" fill="#f8f8f8" />
              </Ic>
            </span>
            Views (all)
          </li>
          <li className={row}>
            <span className={`w-[10px] ${guide}`} />
            <span className="w-[15px]" />
            <Expander />
            <span className={`mr-[3px] w-[10px] ${lead}`} />
            Floor Plans
          </li>
          {["First Floor", "Roof", "Second Floor", "Site Plan"].map((name) => (
            <li key={name} className={row}>
              <span className={`w-[10px] ${guide}`} />
              <span className={`w-5 ${guide}`} />
              <span className={`w-5 ${guide}`} />
              <span className={`w-[14px] ${lead}`} />
              <span
                className={`h-full px-[3px] leading-[18px] ${name === "First Floor" ? "font-bold" : ""} ${
                  name === "Second Floor" ? "bg-[#e2e2e2]" : ""
                }`}
              >
                {name}
              </span>
            </li>
          ))}
        </ul>
        <div className="mr-[2px] flex w-[15px] flex-col items-center bg-[#f0f0f0]">
          <span className="flex h-[17px] shrink-0 items-center"><Arrow up /></span>
          <span className="w-full flex-1 bg-[#cdcdcd]" />
        </div>
      </div>
    </section>
  );
}

/* ---------- drawing area ---------- */

function PlanIcon({ dim = false }: { dim?: boolean }) {
  return (
    <Ic w={17} h={15} c={dim ? "#808890" : INK}>
      <path d="M.5 1.500h9v3h6v9h-9v-1h-6z" fill="#f4f4f4" />
      <path d="M6.500 13.500v-3M6.500 7.500h3M9.500 4.500v3M12.500 8.500h3M10 8.500h1" />
    </Ic>
  );
}

function ViewTabs() {
  return (
    <div className="flex h-5 shrink-0 bg-[#cacaca] pt-px text-[#444]">
      <button type="button" className="flex w-32 items-center gap-[6px] pl-[5px]">
        <span className="opacity-60"><House /></span>
        {"{3D}"}
      </button>
      <div className="-mt-px flex w-32 items-center bg-white pt-px pl-[5px]">
        <button type="button" className="flex flex-1 items-center gap-[6px] font-bold text-[#333]">
          <PlanIcon />
          First Floor
        </button>
        <Close label="Close First Floor" />
      </div>
      <button type="button" className="flex w-32 items-center gap-[6px] pl-[5px]">
        <PlanIcon dim />
        Second Floor
      </button>
    </div>
  );
}

/* Horizontal hatch dashes, one entry per row: [y, ...x]. */
const DASHES: number[][] = [
  [198, 395, 448, 483, 570, 623, 675, 833, 868],
  [216, 378, 413, 500, 553, 605, 710, 763, 798, 885],
  [233, 343, 430, 483, 535, 640, 693, 728, 816, 868],
  [251, 360, 413, 465, 570, 623, 658, 745, 798, 850],
  [268, 343, 395, 500, 553, 588, 675, 728, 781, 886, 973],
  [286, 430, 483, 518, 658, 710, 815, 868, 903],
  [303, 360, 413, 448, 535, 588, 640, 746, 798, 833, 973],
  [321, 343, 378, 465, 518, 570, 675, 728, 850, 903, 955],
  [338, 395, 448, 500, 605, 658, 781, 833, 886],
  [356, 378, 430, 535, 588, 623, 710, 763, 815, 973],
  [373, 360, 465, 518, 553, 640, 693, 746, 851, 903, 938],
  [391, 395, 448, 483, 570, 833, 868, 955],
  [408, 378, 413, 500, 553, 886, 938],
  [426, 343, 430, 483, 640, 693, 728, 868],
  [443, 360, 413, 465, 623, 658, 745, 850, 955],
  [461, 343, 395, 500, 553, 675, 728, 885, 938],
  [478, 430, 483, 518, 658, 711, 868, 903],
  [496, 360, 413, 448, 535, 640, 745, 833, 973],
  [513, 343, 378, 465, 518, 571, 676, 728, 763, 851, 956],
  [531, 395, 448, 500, 658, 693, 780, 833, 885],
  [548, 378, 430, 536, 623, 711, 763, 973],
  [566, 360, 465, 518, 553, 640, 693, 745, 850, 903, 938],
  [583, 395, 448, 483, 571, 676, 780, 833, 868, 956],
  [601, 378, 413, 500, 553, 710, 763, 885, 938],
  [618, 343, 430, 483, 536, 641, 693, 728, 868],
  [636, 955],
  [653, 343, 396, 501, 553, 588, 676, 728, 781, 886, 938, 973],
  [671, 483, 518, 605, 658, 710, 815, 868, 903],
  [688, 360, 413, 588, 641, 746, 798, 833, 921, 973],
  [706, 343, 378, 465, 518, 570, 675, 728, 781, 903, 955],
];

/* Aggregate flecks as x,y pairs, grouped by slant. */
const RISING =
  "345,208 384,211 438,222 390,235 432,198 471,200 525,212 564,214 531,235 484,248 358,256 412,267 451,269 505,281 457,294 464,317 487,311 338,325 392,337 431,339 344,350 351,373 524,353 492,374 531,376 468,381 444,387 551,307 557,331 577,261 601,255 625,248 599,294 638,297 605,318 581,324 644,320 650,344 579,364 618,366 561,394 412,408 466,419 355,437 379,430 418,433 559,433 511,445 690,205 714,199 807,213 712,239 751,240 877,233 870,209 718,262 757,264 811,276 764,288 692,307 731,310 698,331 785,321 825,322 831,347 844,254 881,295 878,335 885,358 861,364 837,372 768,352 672,377 711,379 847,427 841,434 904,430 874,427 772,414 724,427 897,407 944,291 932,399 954,379 952,418 918,196 424,457 352,476 446,489 398,501 359,499 335,505 404,526 452,513 372,547 339,568 378,572 426,558 465,560 408,589 352,616 478,608 485,491 565,457 542,463 539,502 578,504 519,572 658,471 611,483 632,516 615,547 619,609 658,611 365,664 506,665 458,677 551,691 386,697 479,711 599,678 575,685 638,681 413,652 571,622 839,473 845,497 790,486 752,483 728,491 725,529 677,543 765,531 732,553 708,559 777,579 771,555 858,545 891,523 885,500 895,586 838,614 659,612 932,486 939,511 951,558 963,607 956,583 876,654 944,676 851,662 779,681 818,684 786,705 725,670 686,669 899,649 826,567 966,702";
const FALLING =
  "356,205 380,213 404,219 458,207 451,231 512,196 514,235 560,209 584,215 623,213 647,219 343,253 367,260 406,258 430,264 454,270 399,281 508,259 502,283 526,290 565,287 562,248 610,261 634,267 417,312 480,316 504,322 348,331 372,338 395,344 450,333 443,357 552,335 558,311 576,341 615,339 639,345 335,379 359,386 398,383 422,390 500,385 446,396 391,407 494,409 557,413 385,431 409,438 448,436 550,437 496,448 725,215 671,226 777,196 779,204 827,217 851,223 890,221 914,227 742,245 673,265 694,268 697,271 721,279 775,267 899,264 667,289 769,291 793,297 832,295 856,301 904,288 902,275 964,279 660,313 684,319 723,317 747,323 771,330 818,342 843,349 717,341 882,346 906,353 734,371 797,375 893,401 761,417 974,309 978,372 956,405 950,315 676,445 726,447 930,359 925,422 340,458 387,470 442,459 435,483 390,509 438,522 351,512 498,487 522,494 546,500 567,467 548,539 377,557 401,564 440,561 433,584 488,574 542,563 559,593 490,613 427,609 451,616 514,620 630,471 618,519 644,565 623,598 657,517 477,661 540,665 545,667 588,678 369,683 393,689 456,694 480,700 636,691 534,689 709,467 763,455 877,475 873,472 789,501 759,518 861,520 681,523 704,496 668,572 731,575 684,566 754,581 706,598 865,598 911,573 917,548 913,611 948,531 974,577 975,474 923,524 757,621 916,650 830,679 768,674 660,697 723,701 747,707 801,696 855,685 927,704 909,672 968,669 939,653";
const UPRIGHT =
  "350,230 414,228 477,224 475,238 507,242 538,242 570,238 619,225 616,237 657,227 364,280 345,293 418,291 394,298 393,306 370,304 456,310 511,305 544,283 588,294 612,300 485,350 506,362 530,368 398,361 437,363 467,364 374,367 341,356 608,363 537,400 517,416 504,422 372,406 337,419 718,239 783,219 781,243 756,198 829,256 900,226 831,266 877,269 670,275 787,282 850,278 879,308 738,334 791,345 743,358 710,365 773,369 875,371 917,337 663,352 747,421 784,423 658,415 858,404 978,411 959,442 951,327 363,464 333,482 391,478 459,490 413,516 428,519 383,534 333,545 485,535 497,539 509,542 521,533 545,526 572,546 355,590 384,595 379,597 558,574 535,587 525,596 564,598 517,470 634,477 638,540 650,541 612,585 651,588 646,604 388,658 375,660 564,672 631,657 642,667 338,710 518,713 527,713 644,705 697,473 765,495 702,491 745,460 784,462 671,518 752,543 776,549 834,475 897,479 863,560 864,569 870,593 889,605 826,601 910,454 700,593 931,628 963,663 744,669 824,708 696,656 668,698 937,708 973,489 761,712";

const points = (s: string) => s.split(" ").map((p) => p.split(",").map(Number));

const HATCH = [
  ...DASHES.flatMap(([y, ...xs]) => xs.map((x) => `M${x - 1} ${y}h3v1h-3z`)),
  ...points(RISING).map(([x, y]) => `M${x} ${y - 1}h1v1h-1zM${x - 1} ${y}h1v2h-1z`),
  ...points(FALLING).map(([x, y]) => `M${x - 1} ${y - 1}h1v1h-1zM${x} ${y}h1v2h-1z`),
  ...points(UPRIGHT).map(([x, y]) => `M${x} ${y - 1}h1v2h-1z`),
].join("");

const BOUNDARY_X = [[471, 521], [541, 582], [603, 644], [664, 705], [726, 767], [787, 829], [849, 890], [911, 960]];
const BOUNDARY_Y = [[252, 278], [299, 340], [360, 401], [422, 463], [483, 524], [545, 586], [607, 648], [668, 695]];
const BOUNDARY = [
  ...BOUNDARY_X.flatMap(([a, b]) => [`M${a} 252.5H${b}`, `M${a} 694.5H${b}`]),
  ...BOUNDARY_Y.flatMap(([a, b]) => [`M471.5 ${a}V${b}`, `M959.5 ${a}V${b}`]),
].join("");

const TREADS = [300, 341, 382, 423, 464, 505, 546, 587, 623].map((y) => `M928 ${y}.5H3000`).join("");

function FloorPlan() {
  return (
    <svg role="img" aria-label="First floor plan" className="mt-[2px] ml-[2px] min-h-0 flex-1" shapeRendering="crispEdges" fill="none" stroke="#000">
      <g transform="translate(-332 -195)">
        <path d={HATCH} fill="#000" stroke="none" />
        <path d="M580.500 623V381.500H823.500V623M607.500 623V408.500H796M607 437.500H796M629.500 410.500H768.500V428.500H629.500z" />
        <path d="M796 408V623" strokeWidth="2" />
        <path d="M607.500 437.500L796 623M796 437.500L607.500 623" strokeWidth=".7" />
        <path d="M332 623.500H894.500V650.500H449.500V1200M332 650.500H421.500V1200" />
        <path d="M733 195L817 253M801 232L817 253L791 243M928 287L980 243" strokeWidth=".8" />
        <path d="M920.500 195V286.500H928M934.500 195V623M940.500 195V623M929 218.500H934M940 218.500H3000M929 259.500H934M940 259.500H3000M921 623.500H929" />
        <path d="M928 195V286M921 286V623" strokeWidth="2" />
        <path d="M927.500 286V623" strokeWidth="3" />
        <path d={TREADS} />
        <path d={BOUNDARY} stroke="#f00" />
      </g>
    </svg>
  );
}

export default function App() {
  return (
    <div className="relative flex h-screen flex-col overflow-hidden bg-[#cacaca] font-['Open_Sans','Noto_Sans',sans-serif] text-xs text-[#333]">
      <QuickAccess />
      <RibbonTabs />
      <Ribbon />
      <OptionsBar />
      <main className="mt-[2px] flex min-h-0 flex-1">
        <aside className="flex w-[330px] shrink-0 flex-col border-r-2 border-[#c6c6c6]">
          <PropertiesPalette />
          <ProjectBrowser />
        </aside>
        <div className="flex min-w-0 flex-1 flex-col bg-white">
          <ViewTabs />
          <FloorPlan />
        </div>
      </main>
      <div className="pointer-events-none absolute top-[132px] left-[187px] h-[53px] w-[102px] border-8 border-[#ff0000]" />
      <div className="pointer-events-none absolute top-[187px] left-[-5px] h-[86px] w-[341px] border-8 border-[#ff0000]" />
    </div>
  );
}
